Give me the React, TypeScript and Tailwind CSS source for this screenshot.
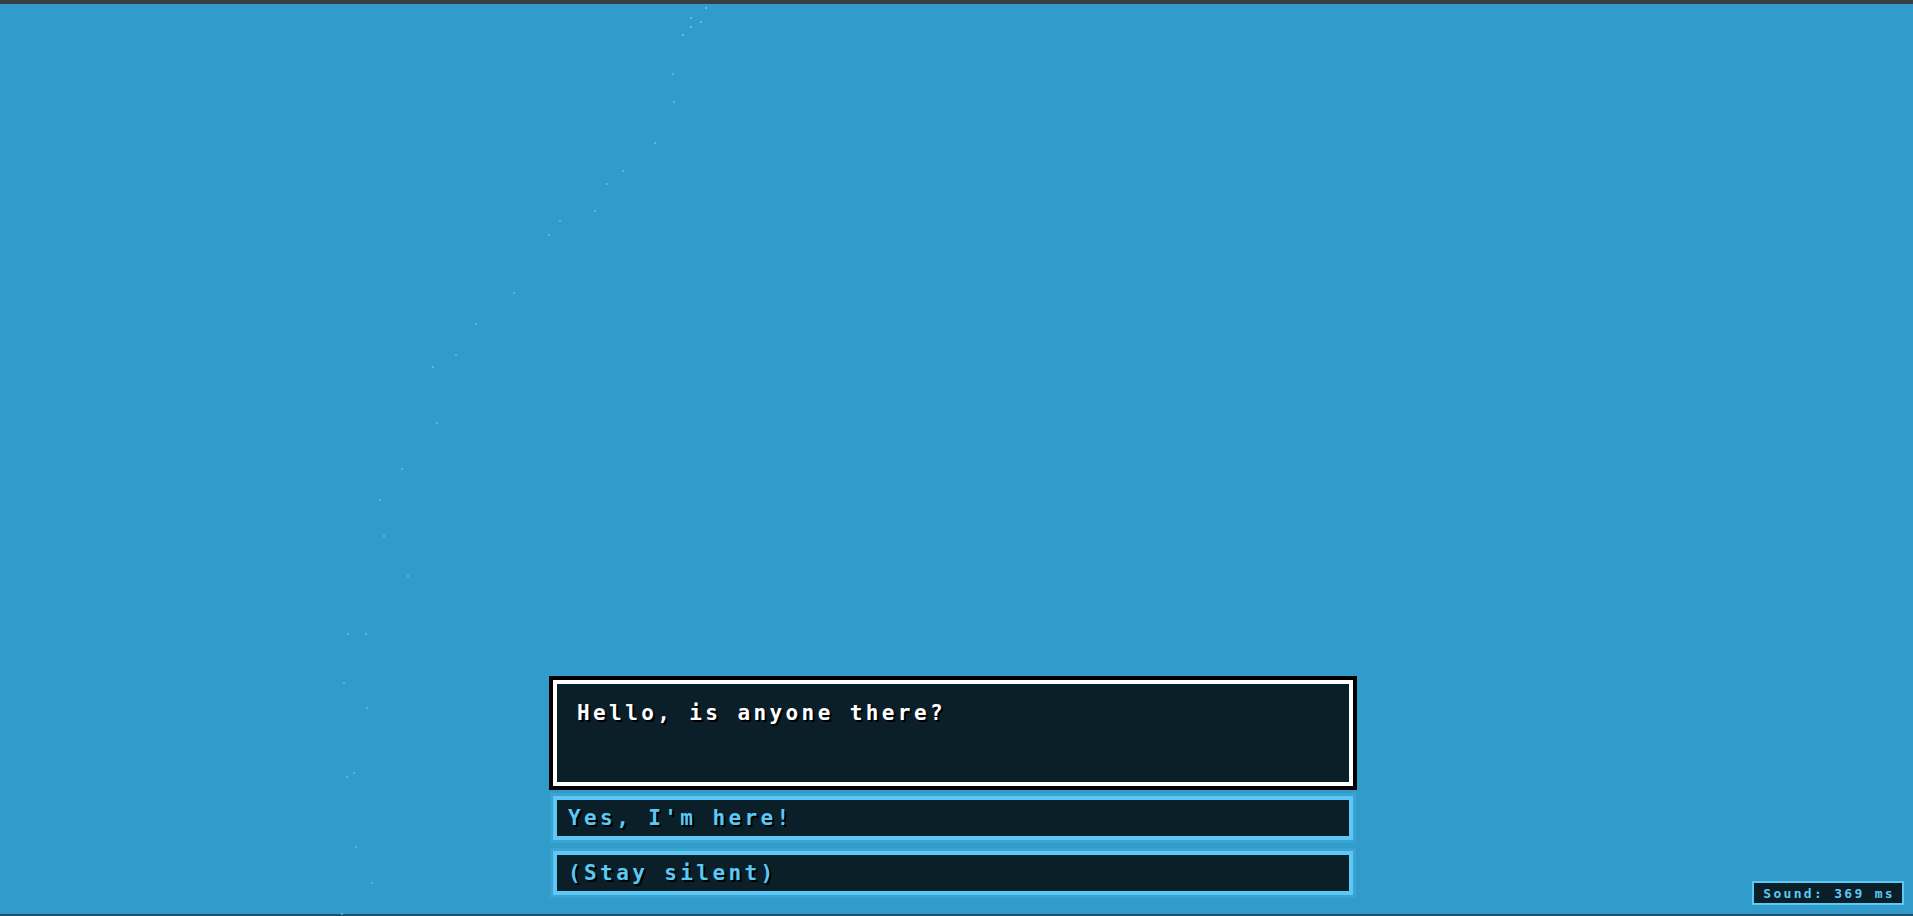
import React from "react";

const dots: [number, number][] = [
  [705, 7], [690, 17], [700, 21], [690, 26], [682, 34],
  [672, 73], [673, 101], [654, 142], [622, 170], [606, 183],
  [594, 210], [559, 220], [548, 234], [513, 292], [475, 323],
  [455, 354], [432, 366], [436, 422], [401, 468], [379, 499],
  [383, 535], [407, 575], [347, 633], [365, 633], [343, 682],
  [366, 707], [353, 772], [346, 776], [355, 846], [371, 882],
  [341, 913],
];

const options = ["Yes, I'm here!", "(Stay silent)"];

function Particles() {
  return (
    <svg
      className="absolute inset-0 pointer-events-none"
      width="1913"
      height="916"
      viewBox="0 0 1913 916"
    >
      {dots.map(([x, y], i) => (
        <rect
          key={i}
          x={x}
          y={y}
          width="2"
          height="2"
          fill="#6cc6ee"
          opacity={i < 5 ? 0.85 : 0.6}
        />
      ))}
    </svg>
  );
}

export default function App() {
  return (
    <div
      className="relative h-screen w-full flex flex-col overflow-hidden bg-[#319ccb]"
      style={{ fontFamily: '"DejaVu Sans Mono", "Liberation Mono", monospace' }}
    >
      <div className="h-[4px] bg-[#3b3e41]" />
      <Particles />
      <div className="relative flex-1 flex flex-col justify-end items-center pb-[19px] pr-[7px]">
        <div className="w-[800px] flex flex-col">
          <div className="h-[106px] border-4 border-white bg-[#0b1f29] shadow-[0_0_0_4px_#000] pt-[15px] px-5">
            <p className="text-[21px] leading-[28px] font-bold tracking-[3.4px] text-white [text-shadow:2px_2px_0_#000]">
              Hello, is anyone there?
            </p>
          </div>
          <div className="mt-[10px] flex flex-col gap-[11px]">
            {options.map((o) => (
              <button
                key={o}
                className="h-[44px] border-4 border-[#5bc8f5] bg-[#0b1f29] px-[11px] flex items-center text-left shadow-[0_0_0_3px_rgba(110,200,240,0.18)]"
              >
                <span className="text-[21px] leading-[28px] font-bold tracking-[3.4px] text-[#5bc8f5] [text-shadow:2px_2px_0_#000]">
                  {o}
                </span>
              </button>
            ))}
          </div>
        </div>
      </div>
      <div className="h-[2px] bg-[#1f4f69]" />
      <div className="absolute bottom-[11px] right-[9px] h-[24px] border-2 border-[#5bc8f5] bg-[#0b1f29] pl-[9px] pr-[7px] flex items-center">
        <span className="text-[13px] leading-none font-bold tracking-[2.3px] text-[#5bc8f5]">
          Sound: 369 ms
        </span>
      </div>
    </div>
  );
}
